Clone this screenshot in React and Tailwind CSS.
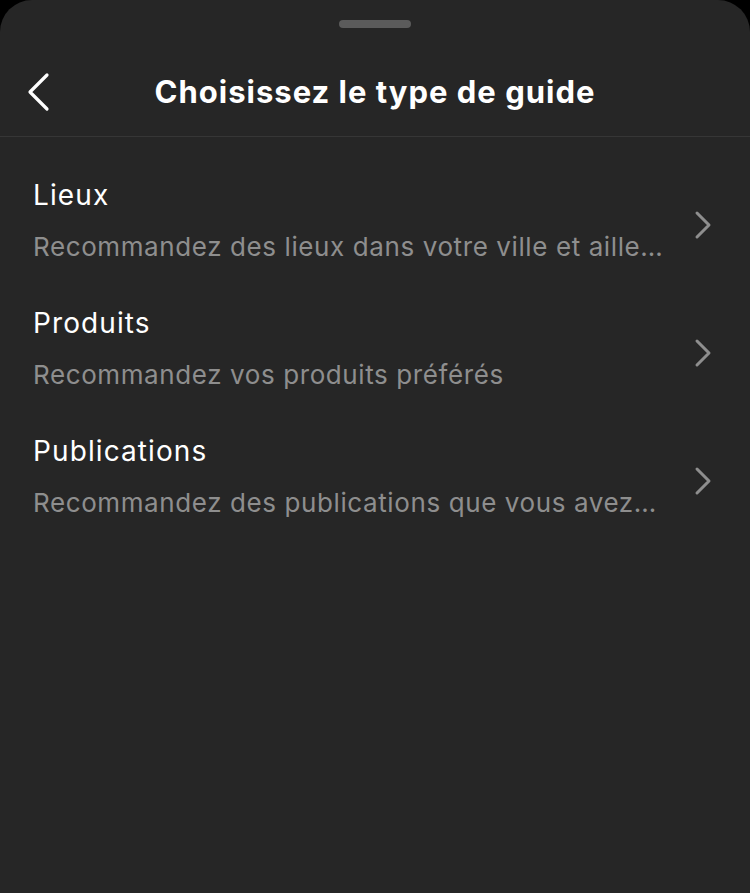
import React from 'react';

const items = [
  { title: 'Lieux', desc: 'Recommandez des lieux dans votre ville et aille…' },
  { title: 'Produits', desc: 'Recommandez vos produits préférés' },
  { title: 'Publications', desc: 'Recommandez des publications que vous avez…' },
];

function BackIcon() {
  return (
    <svg width="26" height="40" viewBox="0 0 26 40" fill="none">
      <path d="M22 3 L5 20 L22 37" stroke="#ffffff" strokeWidth="3.2" strokeLinecap="round" strokeLinejoin="round" />
    </svg>
  );
}

function ChevronRight() {
  return (
    <svg width="18" height="30" viewBox="0 0 18 30" fill="none">
      <path d="M3 3 L15 15 L3 27" stroke="#8e8e8e" strokeWidth="3" strokeLinecap="round" strokeLinejoin="round" />
    </svg>
  );
}

export default function App() {
  return (
    <div className="min-h-screen bg-black" style={{ fontFamily: 'Inter, "Noto Sans", sans-serif' }}>
      <div className="min-h-screen bg-[#262626] rounded-t-[32px] flex flex-col">
        {/* drag handle */}
        <div className="flex justify-center pt-[20px]">
          <div className="w-[72px] h-[8px] rounded-full bg-[#5b5b5b]" />
        </div>

        {/* header */}
        <div className="relative flex items-center justify-center h-[109px] border-b border-[#363636]">
          <button className="absolute left-[25px] top-[44px]">
            <BackIcon />
          </button>
          <h1 className="text-white text-[31px] font-bold tracking-[1px] mt-[20px] whitespace-nowrap">Choisissez le type de guide</h1>
        </div>

        {/* options */}
        <div className="pt-[20px]">
          {items.map((item) => (
            <div key={item.title} className="flex items-center h-[128px] pl-[33px] pr-[38px]">
              <div className="flex-1 min-w-0 pr-[20px]">
                <div className="text-white text-[28px] leading-[34px] tracking-[1.1px]">{item.title}</div>
                <div className="text-[#8e8e8e] text-[26px] leading-[34px] tracking-[0.6px] mt-[18px] whitespace-nowrap">{item.desc}</div>
              </div>
              <div className="mt-[8px]">
                <ChevronRight />
              </div>
            </div>
          ))}
        </div>
      </div>
    </div>
  );
}
